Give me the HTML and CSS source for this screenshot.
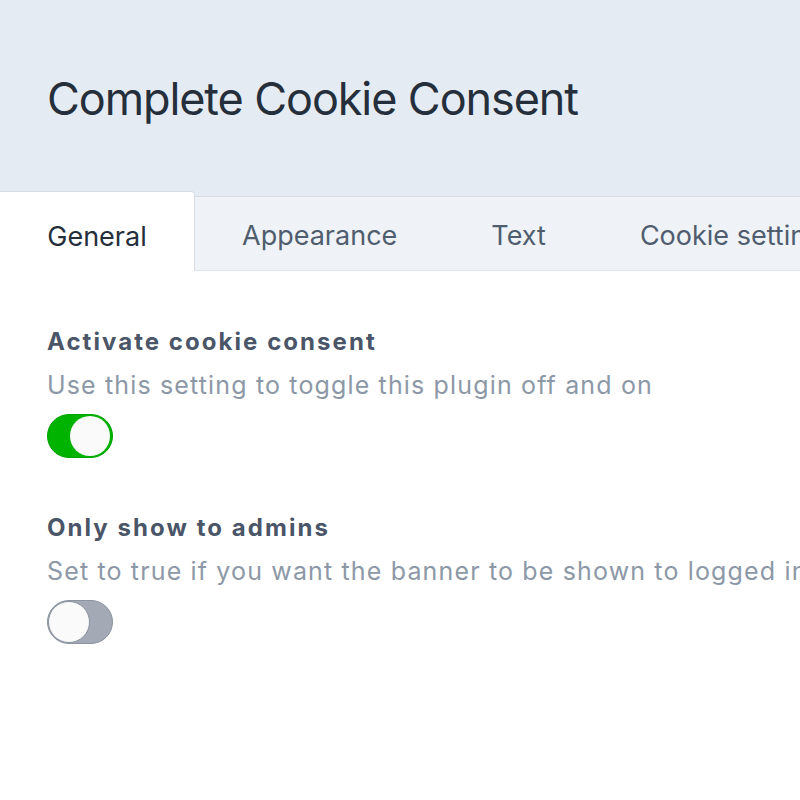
FILE: index.html
```html
<!DOCTYPE html>
<html>
<head>
<meta charset="utf-8">
<link rel="stylesheet" href="styles.css">
</head>
<body>
<header class="page-header">
  <h1 class="title">Complete Cookie Consent</h1>
</header>
<nav class="tabs">
  <div class="tab active">General</div>
  <div class="tab">Appearance</div>
  <div class="tab">Text</div>
  <div class="tab">Cookie settings</div>
</nav>
<main class="content">
  <section class="setting">
    <h2 class="setting-title">Activate cookie consent</h2>
    <p class="setting-desc">Use this setting to toggle this plugin off and on</p>
    <div class="toggle on"><span class="knob"></span></div>
  </section>
  <section class="setting">
    <h2 class="setting-title">Only show to admins</h2>
    <p class="setting-desc">Set to true if you want the banner to be shown to logged in admins only</p>
    <div class="toggle off"><span class="knob"></span></div>
  </section>
</main>
</body>
</html>
```

FILE: styles.css
```css
* { box-sizing: border-box; }
html, body { margin: 0; padding: 0; }
body {
  width: 800px;
  overflow: hidden;
  font-family: Inter, "Noto Sans", sans-serif;
  background: #fff;
}
.page-header {
  background: #e5ebf3;
  height: 196px;
  padding: 0 47px;
  display: flex;
  align-items: center;
}
.title {
  margin: 0;
  font-weight: 400;
  font-size: 45px;
  color: #252f3c;
  letter-spacing: -1.1px;
  white-space: nowrap;
}
.tabs {
  display: flex;
  height: 75px;
  background: #eff3f7;
  border-top: 1px solid #d6dde5;
  border-bottom: 1px solid #dfe4ea;
  white-space: nowrap;
}
.tab {
  padding: 4px 47px 0;
  display: flex;
  align-items: center;
  font-size: 27px;
  color: #4f5d6e;
  flex-shrink: 0;
}
.tab.active {
  background: #fff;
  color: #252f3c;
  margin-top: -6px;
  margin-bottom: -1px;
  border-top: 1px solid #d6dde5;
  border-right: 1px solid #d6dde5;
  border-top-right-radius: 4px;
  padding-top: 9px;
  width: 195px;
  justify-content: center;
  padding-left: 0;
  padding-right: 0;
}
.content {
  padding: 55px 47px 0;
}
.setting { margin-bottom: 54px; white-space: nowrap; }
.setting-title {
  margin: 0;
  font-size: 24px;
  font-weight: 700;
  color: #4a5668;
  line-height: 32px;
  letter-spacing: 2.05px;
}
.setting-desc {
  margin: 11px 0 0;
  font-size: 25px;
  color: #8d98a7;
  line-height: 32px;
  letter-spacing: 1.15px;
}
.toggle {
  margin-top: 13px;
  width: 66px;
  height: 44px;
  border-radius: 22px;
  display: flex;
  align-items: center;
  padding: 0 2px;
}
.toggle.on {
  background: #00b300;
  border: 1px solid #00a000;
  justify-content: flex-end;
}
.toggle.off {
  background: #a3aab5;
  border: 1px solid #8b939f;
  justify-content: flex-start;
  padding: 0;
}
.knob {
  width: 40px;
  height: 40px;
  border-radius: 50%;
  background: #fafafa;
}
.toggle.off .knob {
  width: 42px;
  height: 42px;
  border: 1px solid #8b939f;
}
```
